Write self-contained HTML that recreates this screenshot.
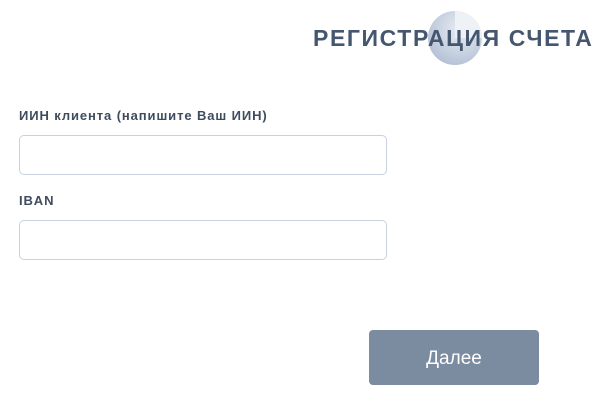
<!DOCTYPE html>
<html><head><meta charset="utf-8"><style>
body{margin:0;width:605px;height:401px;background:#fff;position:relative;overflow:hidden;font-family:"Liberation Sans",sans-serif;}
.circ{position:absolute;left:428px;top:11px;width:54px;height:54px;border-radius:50%;background:radial-gradient(circle at 60% 35%,#e8edf4,#b9c6d8 70%,#a5b5cb);}
.circ:after{content:"";position:absolute;left:27px;top:0;width:27px;height:27px;border-top-right-radius:27px;background:#eef1f6;}
.title{position:absolute;left:313px;top:25px;font-size:23px;font-weight:bold;color:#45566f;letter-spacing:1.6px;white-space:nowrap;}
.lbl{position:absolute;left:19px;font-size:13px;font-weight:bold;color:#3f4c5e;letter-spacing:0.9px;}
.inp{position:absolute;left:19px;width:366px;height:38px;border:1px solid #c7d1df;border-radius:5px;}
.btn{position:absolute;left:369px;top:330px;width:170px;height:55px;background:#7b8ba0;border-radius:4px;color:#fff;font-size:19px;text-align:center;line-height:57px;}
</style></head><body>
<div class="circ"></div>
<div class="title">РЕГИСТРАЦИЯ СЧЕТА</div>
<div class="lbl" style="top:108px">ИИН клиента (напишите Ваш ИИН)</div>
<div class="inp" style="top:135px"></div>
<div class="lbl" style="top:193px">IBAN</div>
<div class="inp" style="top:220px"></div>
<div class="btn">Далее</div>
</body></html>
